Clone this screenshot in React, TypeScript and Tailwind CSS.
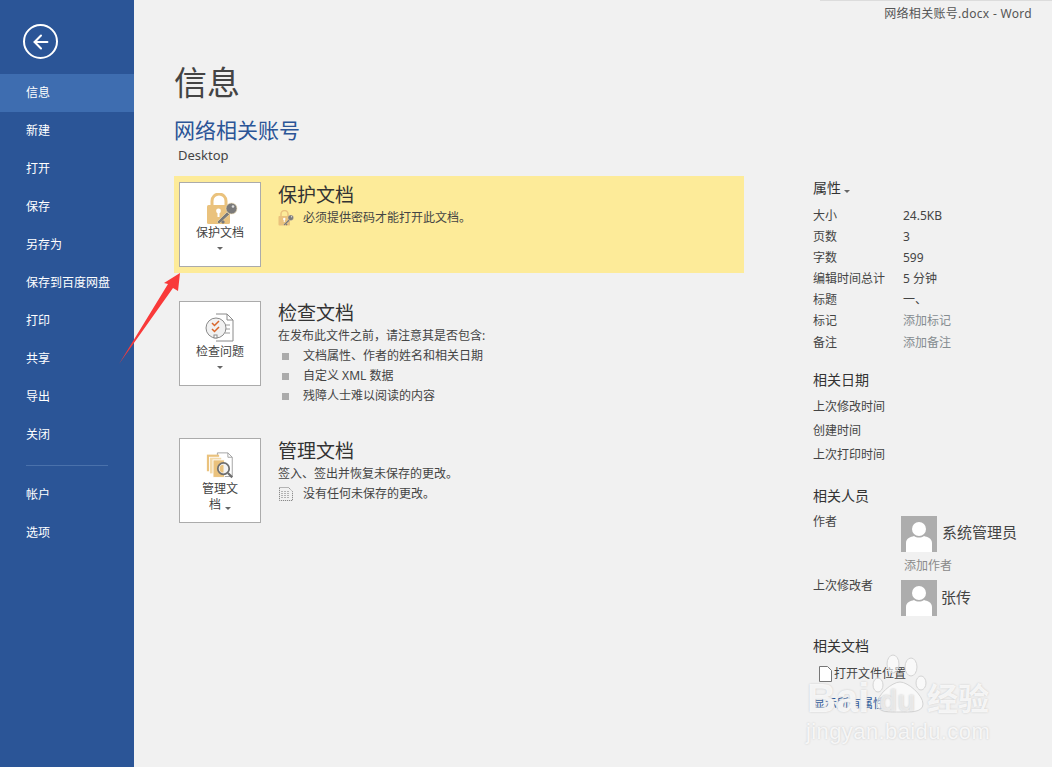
import { ArrowLeft } from "lucide-react";

const navTop = ["信息", "新建", "打开", "保存", "另存为", "保存到百度网盘", "打印", "共享", "导出", "关闭"];
const navBottom = ["帐户", "选项"];

const props = [
  { label: "大小", value: "24.5KB" },
  { label: "页数", value: "3" },
  { label: "字数", value: "599" },
  { label: "编辑时间总计", value: "5 分钟" },
  { label: "标题", value: "一、" },
  { label: "标记", value: "添加标记", muted: true },
  { label: "备注", value: "添加备注", muted: true },
];

function Caret() {
  return <span className="inline-block h-0 w-0 border-x-[3px] border-t-[3px] border-x-transparent border-t-[#666]" />;
}

function LockKey({ small }: { small?: boolean }) {
  return (
    <svg viewBox="0 0 32 32" className={small ? "h-[16px] w-[16px]" : "h-[32px] w-[32px]"}>
      <path d="M6 13V8a7 7 0 0 1 14 0v5" fill="none" stroke="#eac27d" strokeWidth="3" />
      <rect x="1" y="12" width="23" height="19" rx="1.5" fill="#eac27d" />
      <circle cx="12.5" cy="18" r="2.4" fill="#fff" />
      <rect x="11.5" y="18" width="2" height="6" fill="#fff" />
      <path d="M13 31l-2-2 10-10 2.5 2.5z" fill="#7a7a7a" stroke="#f7e2b5" strokeWidth="0.6" />
      <path d="M15 29l2 2 2-2-2-2z" fill="#7a7a7a" />
      <circle cx="25.5" cy="15.5" r="5.5" fill="#7a7a7a" stroke="#f7e2b5" strokeWidth="0.6" />
      <circle cx="27" cy="13.5" r="1.3" fill="#ddd" />
    </svg>
  );
}

function InspectIcon() {
  return (
    <svg viewBox="0 0 32 32" className="h-[32px] w-[32px]" fill="none">
      <path d="M12 2h11l6 6v21H12" stroke="#8a8a8a" />
      <path d="M23 2v6h6" stroke="#8a8a8a" />
      <path d="M21 13h5M21 17h5M21 21h5" stroke="#9a9a9a" />
      <circle cx="12" cy="16" r="10" fill="#f1f1f1" stroke="#8a8a8a" />
      <path d="M8 11l2.5 2.5L15 9M8 17l2.5 2.5L15 15" stroke="#d9662b" strokeWidth="1.5" />
      <rect x="10" y="23" width="3" height="3" fill="#fff" stroke="#8a8a8a" />
    </svg>
  );
}

function ManageIcon() {
  return (
    <svg viewBox="0 0 32 32" className="mt-[3px] h-[28px] w-[28px]" fill="none">
      <path d="M13 1h12l5 5v22H13z" fill="#fff" stroke="#9a9a9a" />
      <path d="M25 1v5h5" stroke="#9a9a9a" />
      <rect x="1" y="3" width="14" height="19" fill="#eac27d" />
      <rect x="4" y="6" width="14" height="19" fill="#f3d9a8" stroke="#fff" />
      <rect x="8" y="9" width="13" height="20" fill="#eac27d" stroke="#fff" />
      <circle cx="20" cy="19" r="6.5" fill="#f3f3f3" stroke="#6e6e6e" strokeWidth="2" />
      <path d="M20 14.5a4.5 4.5 0 0 0 0 9z" fill="#eac27d" />
      <path d="M25 24l5 5" stroke="#6e6e6e" strokeWidth="2.5" />
    </svg>
  );
}

function Avatar() {
  return (
    <svg viewBox="0 0 36 36" className="h-[36px] w-[36px] shrink-0">
      <rect width="36" height="36" fill="#adadad" />
      <circle cx="18" cy="13" r="7" fill="#fff" />
      <path d="M5 36v-9c0-5 5-6 8-7 3 2 7 2 10 0 3 1 8 2 8 7v9z" fill="#fff" />
    </svg>
  );
}

function SectionButton({ children, label }: { children: React.ReactNode; label: React.ReactNode }) {
  return (
    <div className="flex h-[85px] w-[82px] shrink-0 flex-col items-center border border-[#ababab] bg-white pt-[10px] text-center text-[12px] leading-[16px] text-[#444]">
      <div className="h-[32px]">{children}</div>
      <div>{label}</div>
    </div>
  );
}

export default function App() {
  return (
    <div className="relative flex h-[767px] w-[1052px] overflow-hidden bg-[#f1f1f1] font-['Noto_Sans','Noto_Sans_CJK_SC',sans-serif] text-[12px] text-[#444]">
      {/* sidebar */}
      <div className="flex w-[134px] shrink-0 flex-col bg-[#2b5597] text-white">
        <div className="h-[74px] pl-[23px] pt-[24px]">
          <div className="flex h-[35px] w-[35px] items-center justify-center rounded-full border-2 border-white">
            <ArrowLeft className="h-[22px] w-[22px]" strokeWidth={2.25} />
          </div>
        </div>
        {navTop.map((item, i) => (
          <div key={item} className={`flex h-[38px] items-center pl-[26px] ${i === 0 ? "bg-[#3e6db0]" : ""}`}>
            {item}
          </div>
        ))}
        <div className="mx-[26px] mb-[10px] mt-[11px] h-px w-[82px] bg-[#4a71ab]" />
        {navBottom.map((item) => (
          <div key={item} className="flex h-[38px] items-center pl-[26px]">
            {item}
          </div>
        ))}
      </div>

      {/* main */}
      <div className="flex min-w-0 flex-1 flex-col">
        <div className="pr-[20px] pt-[6px] text-right leading-[16px] tracking-[0.3px] text-[#555]">网络相关账号.docx - Word</div>
        <div className="ml-[40px] mt-[37px] text-[33px] leading-[48px] text-[#444]">信息</div>
        <div className="ml-[40px] mt-[8px] text-[21px] leading-[30px] text-[#2b5597]">网络相关账号</div>
        <div className="ml-[44px] mt-[1px] text-[13px] leading-[18px]">Desktop</div>

        <div className="mt-[12px] flex">
          <div className="ml-[40px] w-[570px] shrink-0">
            <div className="flex h-[97px] bg-[#fdeb99] pl-[5px] pt-[6px]">
              <SectionButton label={<>保护文档<div className="flex h-[14px] items-center justify-center"><Caret /></div></>}>
                <div className="ml-[4px]"><LockKey /></div>
              </SectionButton>
              <div className="ml-[17px] pt-[1px]">
                <div className="text-[19px] leading-[24px] text-[#333]">保护文档</div>
                <div className="mt-[2px] flex items-center leading-[18px]">
                  <LockKey small />
                  <span className="ml-[9px]">必须提供密码才能打开此文档。</span>
                </div>
              </div>
            </div>

            <div className="mt-[28px] flex h-[85px] pl-[5px]">
              <SectionButton label={<>检查问题<div className="flex h-[14px] items-center justify-center"><Caret /></div></>}>
                <InspectIcon />
              </SectionButton>
              <div className="ml-[17px]">
                <div className="text-[19px] leading-[24px] text-[#333]">检查文档</div>
                <div className="mt-[2px] leading-[18px]">在发布此文件之前，请注意其是否包含:</div>
                {["文档属性、作者的姓名和相关日期", "自定义 XML 数据", "残障人士难以阅读的内容"].map((t) => (
                  <div key={t} className="mt-[2px] flex h-[18px] items-center">
                    <span className="ml-[4px] mr-[14px] h-[7px] w-[7px] bg-[#ababab]" />
                    {t}
                  </div>
                ))}
              </div>
            </div>

            <div className="mt-[52px] flex h-[85px] pl-[5px]">
              <SectionButton label={<>管理文<br />档 <span className="ml-[1px] inline-block align-middle"><Caret /></span></>}>
                <ManageIcon />
              </SectionButton>
              <div className="ml-[17px] pt-[1px]">
                <div className="text-[19px] leading-[24px] text-[#333]">管理文档</div>
                <div className="mt-[2px] leading-[18px]">签入、签出并恢复未保存的更改。</div>
                <div className="mt-[2px] flex h-[18px] items-center">
                  <svg viewBox="0 0 16 16" className="mr-[9px] h-[16px] w-[16px]" fill="none" stroke="#777" strokeDasharray="1 1">
                    <path d="M1.5 1.5h9l4 4v9h-13zM4 5v7M7 5v7M10 5v7" />
                  </svg>
                  没有任何未保存的更改。
                </div>
              </div>
            </div>
          </div>

          {/* properties */}
          <div className="ml-[69px] flex-1">
            <div className="flex h-[22px] items-center text-[14px] text-[#333]">
              属性<span className="ml-[3px]"><Caret /></span>
            </div>
            <div className="mt-[7px]">
              {props.map((p) => (
                <div key={p.label} className="flex h-[21.17px] items-center">
                  <span className="w-[90px] shrink-0">{p.label}</span>
                  <span className={p.muted ? "text-[#858c90]" : ""}>{p.value}</span>
                </div>
              ))}
            </div>
            <div className="mt-[17px] text-[14px] leading-[20px] text-[#333]">相关日期</div>
            <div className="mt-[8px] flex flex-col gap-[6px] leading-[18px]">
              <div>上次修改时间</div>
              <div>创建时间</div>
              <div>上次打印时间</div>
            </div>
            <div className="mt-[22px] text-[14px] leading-[20px] text-[#333]">相关人员</div>
            <div className="mt-[10px] flex">
              <span className="-mt-[3px] w-[88px] shrink-0 leading-[18px]">作者</span>
              <Avatar />
              <span className="ml-[5px] mt-[6px] text-[15px] leading-[20px]">系统管理员</span>
            </div>
            <div className="ml-[91px] mt-[5px] leading-[18px] text-[#8a8a8a]">添加作者</div>
            <div className="mt-[5px] flex">
              <span className="-mt-[3px] w-[88px] shrink-0 leading-[18px]">上次修改者</span>
              <Avatar />
              <span className="ml-[4px] mt-[7px] text-[15px] leading-[20px]">张传</span>
            </div>
            <div className="mt-[20px] text-[14px] leading-[20px] text-[#333]">相关文档</div>
            <div className="ml-[5px] mt-[9px] flex items-center leading-[18px]">
              <svg viewBox="0 0 14 16" className="mr-[2px] h-[16px] w-[14px]" fill="#fff" stroke="#777">
                <path d="M1.5.5h8l4 4v11h-12z" />
              </svg>
              打开文件位置
            </div>
            <div className="mt-[12px] leading-[18px] text-[#2b5597]">显示所有属性</div>
          </div>
        </div>
      </div>

      {/* annotation arrow */}
      <svg className="absolute left-[115px] top-[268px] h-[100px] w-[70px]" viewBox="0 0 70 100">
        <path d="M65 5L63 23 58 20 4 96 53 16 49 15z" fill="#f93a3a" />
      </svg>

      {/* title bar shadow */}
      <div className="absolute right-0 top-0 h-px w-[232px] bg-[#dcdcdc]" />

      {/* watermark */}
      <div className="absolute left-[800px] top-[650px] h-[100px] w-[210px] font-['Liberation_Sans',sans-serif] text-white/80 [text-shadow:0_0_2px_#c4c4c4]">
        <svg viewBox="0 0 60 65" className="absolute left-[70px] top-0 h-[65px] w-[60px]" fill="#ffffff" fillOpacity="0.55" stroke="#d4d4d4">
          <ellipse cx="8" cy="35" rx="5" ry="7" />
          <ellipse cx="23" cy="14" rx="6" ry="9" />
          <ellipse cx="41" cy="17" rx="6" ry="9" />
          <ellipse cx="51" cy="33" rx="5" ry="7" />
          <path d="M30 32c8 0 23 13 23 22 0 9-14 8-23 8s-23 1-23-8c0-9 15-22 23-22z" />
        </svg>
        <div className="absolute left-[7px] top-[26px] text-[40px] font-bold leading-[44px]">Bai</div>
        <div className="absolute left-[79px] top-[34px] text-[30px] font-bold leading-[34px] text-[#f1f1f1]/80">du</div>
        <div className="absolute left-[127px] top-[27px] font-['Noto_Sans_CJK_SC',sans-serif] text-[31px] font-bold leading-[40px]">经验</div>
        <div className="absolute left-[6px] top-[69px] text-[22px] leading-[26px] tracking-[0.4px]">jingyan.baidu.com</div>
      </div>
    </div>
  );
}
